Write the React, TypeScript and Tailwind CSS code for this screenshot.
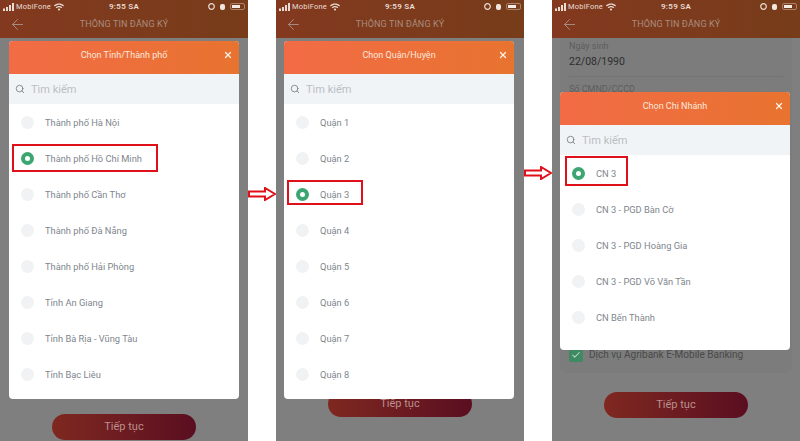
import React from "react";
import { ArrowLeft, Check, Search, X } from "lucide-react";
import { FaWifi } from "react-icons/fa";

const StatusBar: React.FC<{ time: string }> = ({ time }) => (
  <div className="flex h-[13px] items-center pl-[3px] pr-[3px] text-[8px] leading-none text-[#e9dcd4]">
    <div className="flex flex-1 items-center">
      <svg width="12" height="8" viewBox="0 0 12 8" fill="currentColor">
        <rect x="0" y="5.5" width="2" height="2.5" />
        <rect x="3" y="4" width="2" height="4" />
        <rect x="6" y="2" width="2" height="6" />
        <rect x="9" y="0" width="2" height="8" />
      </svg>
      <span className="ml-[1px] text-[7.5px] tracking-[0.2px]">MobiFone</span>
      <FaWifi className="ml-[3px]" size={10} />
    </div>
    <span className="font-semibold tracking-[0.3px]">{time}</span>
    <div className="flex flex-1 items-center justify-end gap-[5px]">
      <svg width="7" height="7" viewBox="0 0 7 7" fill="none" stroke="currentColor" strokeWidth="1.2">
        <circle cx="3.5" cy="3.5" r="2.8" />
      </svg>
      <div className="h-[6px] w-[5px] rounded-[2px] bg-[#f0e6df]" />
      <div className="flex h-[7px] w-[15px] items-center rounded-[2px] border border-[#a9806c] p-[1px]">
        <div className="h-full w-[8px] bg-[#f5ece6]" />
      </div>
    </div>
  </div>
);

const TopBar: React.FC<{ time: string }> = ({ time }) => (
  <div className="h-[38px] shrink-0 bg-gradient-to-r from-[#83391f] to-[#773c1a]">
    <StatusBar time={time} />
    <div className="relative flex h-[25px] items-center justify-center">
      <ArrowLeft className="absolute left-[9px] top-[3px] text-[#a68c80]" size={17} strokeWidth={1.4} />
      <span className="pb-[1px] text-[9px] tracking-[0.1px] text-[#a98c7d]">THÔNG TIN ĐĂNG KÝ</span>
    </div>
  </div>
);

const Radio: React.FC<{ selected?: boolean }> = ({ selected }) =>
  selected ? (
    <div className="flex h-[13px] w-[13px] items-center justify-center rounded-full bg-[#3ba672]">
      <div className="h-[5px] w-[5px] rounded-full bg-white" />
    </div>
  ) : (
    <div className="h-[13px] w-[13px] rounded-full bg-[#f1f2f3]" />
  );

type Option = { label: string; selected?: boolean; boxClass?: string };

const Modal: React.FC<{ title: string; options: Option[]; className: string }> = ({ title, options, className }) => (
  <div className={`absolute w-[230px] overflow-hidden rounded-[4px] bg-white ${className}`}>
    <div className="relative flex h-[33px] items-center justify-center bg-gradient-to-r from-[#f26b45] to-[#e8732f] pb-[4px] text-[9px] text-[#fde8dc]">
      {title}
      <X className="absolute right-[6px] top-[9px] text-[#fdf1ea]" size={10} strokeWidth={3} />
    </div>
    <div className="flex h-[30px] items-center bg-[#f1f4f7] pl-[6px] text-[11px] text-[#b9bec4]">
      <Search className="text-[#767c84]" size={10} strokeWidth={2} />
      <span className="ml-[6px] pt-[2px]">Tìm kiếm</span>
    </div>
    {options.map((o) => (
      <div key={o.label} className="relative flex h-[36px] items-center gap-[11px] pl-[12px] text-[9.3px] text-[#80868d]">
        <Radio selected={o.selected} />
        <span className="pt-[1px]">{o.label}</span>
        {o.boxClass && <div className={`absolute border-2 border-[#e0101a] ${o.boxClass}`} />}
      </div>
    ))}
  </div>
);

const NextButton: React.FC<{ className: string }> = ({ className }) => (
  <div className={`flex h-[26px] w-[144px] items-center justify-center self-center rounded-full bg-gradient-to-r from-[#7f2820] to-[#5a0e20] text-[11px] text-[#bb908d] ${className}`}>
    Tiếp tục
  </div>
);

const Arrow: React.FC<{ className: string }> = ({ className }) => (
  <div className={`w-[28px] shrink-0 ${className}`}>
    <svg width="28" height="14" viewBox="0 0 28 14">
      <path d="M1 4.5H17V1L27 7L17 13V9.5H1Z" fill="#fff" stroke="#e0101a" strokeWidth="2" />
    </svg>
  </div>
);

const cities: Option[] = [
  { label: "Thành phố Hà Nội" },
  { label: "Thành phố Hồ Chí Minh", selected: true, boxClass: "left-[3px] top-[4px] h-[28px] w-[146px]" },
  { label: "Thành phố Cần Thơ" },
  { label: "Thành phố Đà Nẵng" },
  { label: "Thành phố Hải Phòng" },
  { label: "Tỉnh An Giang" },
  { label: "Tỉnh Bà Rịa - Vũng Tàu" },
  { label: "Tỉnh Bạc Liêu" },
];

const districts: Option[] = [
  { label: "Quận 1" },
  { label: "Quận 2" },
  { label: "Quận 3", selected: true, boxClass: "left-[3px] top-[4px] h-[25px] w-[76px]" },
  { label: "Quận 4" },
  { label: "Quận 5" },
  { label: "Quận 6" },
  { label: "Quận 7" },
  { label: "Quận 8" },
];

const branches: Option[] = [
  { label: "CN 3", selected: true, boxClass: "left-[5px] top-[1px] h-[30px] w-[63px]" },
  { label: "CN 3 - PGD Bàn Cờ" },
  { label: "CN 3 - PGD Hoàng Gia" },
  { label: "CN 3 - PGD Võ Văn Tần" },
  { label: "CN Bến Thành" },
];

export default function App() {
  return (
    <div className="flex h-[441px] w-[800px] overflow-hidden bg-white font-['Roboto',sans-serif]">
      <div className="relative flex h-full w-[248px] shrink-0 flex-col bg-[#7f7f7f]">
        <TopBar time="9:55 SA" />
        <NextButton className="mb-[1px] mt-auto" />
        <Modal title="Chọn Tỉnh/Thành phố" options={cities} className="left-[9px] top-[41px] pb-[7px]" />
      </div>

      <Arrow className="pt-[187px]" />

      <div className="relative flex h-full w-[248px] shrink-0 flex-col bg-[#7f7f7f]">
        <TopBar time="9:59 SA" />
        <NextButton className="mb-[24px] mt-auto" />
        <Modal title="Chọn Quận/Huyện" options={districts} className="left-2 top-[41px] pb-[7px]" />
      </div>

      <Arrow className="pt-[166px]" />

      <div className="relative flex h-full w-[248px] shrink-0 flex-col bg-[#7f7f7f]">
        <TopBar time="9:59 SA" />
        <div className="mx-2 flex h-[335px] flex-col rounded-b-[6px] bg-[#7c7c7c] px-[9px] pt-[2px]">
          <span className="text-[9px] leading-[12px] text-[#5c5c5c]">Ngày sinh</span>
          <span className="mt-[3px] border-b border-[#737373] pb-[7px] text-[10.5px] leading-[14px] text-[#2e2e2e]">22/08/1990</span>
          <span className="mt-[6px] text-[9px] leading-[12px] text-[#5c5c5c]">Số CMND/CCCD</span>
          <div className="mb-[11px] mt-auto flex items-center gap-[6px] text-[10px] text-[#4a4a4a]">
            <div className="flex h-[14px] w-[14px] items-center justify-center rounded-[2px] bg-[#3f8a63]">
              <Check className="text-[#b9d8c8]" size={10} strokeWidth={2.5} />
            </div>
            Dịch vụ Agribank E-Mobile Banking
          </div>
        </div>
        <NextButton className="mb-[23px] mt-auto" />
        <Modal title="Chọn Chi Nhánh" options={branches} className="left-2 top-[92px] pb-[15px]" />
      </div>
    </div>
  );
}
